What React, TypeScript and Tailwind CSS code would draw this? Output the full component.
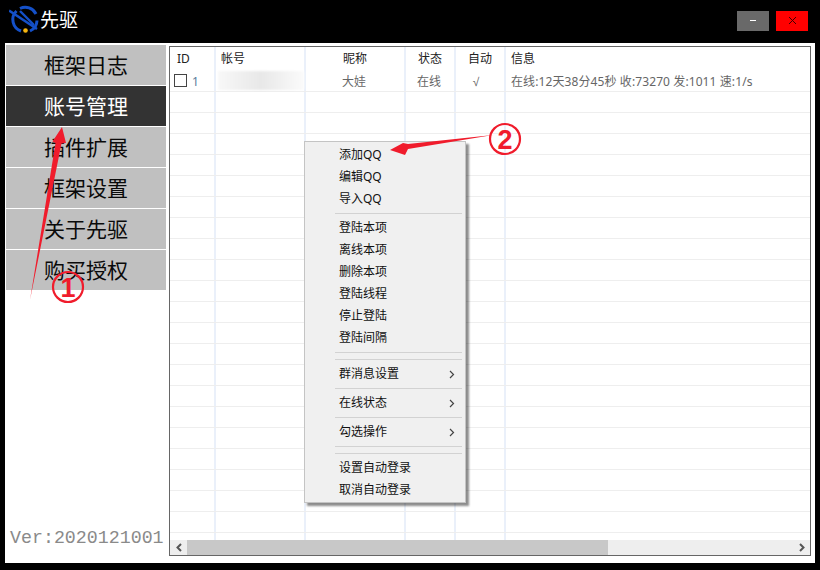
const cjk = { fontFamily: '"Noto Sans", "Noto Sans CJK SC", sans-serif' };

const navItems = ['框架日志', '账号管理', '插件扩展', '框架设置', '关于先驱', '购买授权'];

type Col = { label: string; width: string; align: string };

const columns: Col[] = [
  { label: 'ID', width: 'w-[46px]', align: 'pl-[7px]' },
  { label: '帐号', width: 'w-[90px]', align: 'pl-[5px]' },
  { label: '昵称', width: 'w-[100px]', align: 'justify-center' },
  { label: '状态', width: 'w-[50px]', align: 'justify-center' },
  { label: '自动', width: 'w-[50px]', align: 'justify-center' },
  { label: '信息', width: 'flex-1', align: 'pl-[5px]' },
];

type MenuEntry = { label?: string; sub?: boolean; sep?: boolean };

const menu: MenuEntry[] = [
  { label: '添加QQ' },
  { label: '编辑QQ' },
  { label: '导入QQ' },
  { sep: true },
  { label: '登陆本项' },
  { label: '离线本项' },
  { label: '删除本项' },
  { label: '登陆线程' },
  { label: '停止登陆' },
  { label: '登陆间隔' },
  { sep: true },
  { sep: true },
  { label: '群消息设置', sub: true },
  { sep: true },
  { label: '在线状态', sub: true },
  { sep: true },
  { label: '勾选操作', sub: true },
  { sep: true },
  { sep: true },
  { label: '设置自动登录' },
  { label: '取消自动登录' },
];

function EmptyRow() {
  return (
    <div className="flex h-[21px] shrink-0 border-b border-[#eeeeee]">
      {columns.map((c, i) => (
        <div key={i} className={`${c.width} ${i < 5 ? 'border-r-2 border-[#eaf0fa]' : ''}`} />
      ))}
    </div>
  );
}

export default function App() {
  return (
    <div className="w-[820px] h-[570px] bg-black flex flex-col overflow-hidden relative" style={cjk}>
      {/* title bar */}
      <div className="h-[43px] shrink-0 flex items-center pl-[9px] pr-[12px]">
        <svg width="32" height="30" viewBox="0 0 32 30" className="shrink-0 -mt-[6px]">
          <path d="M7.5 7 A12 12 0 0 0 12 27" fill="none" stroke="#1450c8" strokeWidth="3" />
          <path d="M11 4.5 A12 12 0 0 1 27 10" fill="none" stroke="#1450c8" strokeWidth="3" />
          <path d="M28 16.5 A12 12 0 0 1 21 27" fill="none" stroke="#1450c8" strokeWidth="3" />
          <path d="M0 6.5 L28 25" stroke="#1450c8" strokeWidth="2.6" />
          <path d="M11 7 L25 21" stroke="#1450c8" strokeWidth="2.4" />
          <circle cx="16.5" cy="26.5" r="2.3" fill="#f5b50f" />
        </svg>
        <span className="text-white text-[19px] leading-none -ml-[1px] -mt-[3px]">先驱</span>
        <div className="ml-auto flex gap-[7px] -mt-[2px]">
          <button className="w-[32px] h-[20px] bg-[#696969] flex items-center justify-center">
            <span className="block w-[6px] h-[1px] bg-white" />
          </button>
          <button className="w-[32px] h-[20px] bg-[#ff0000] flex items-center justify-center">
            <svg width="9" height="9" viewBox="0 0 9 9">
              <path d="M1 1 L8 8 M8 1 L1 8" stroke="#400000" strokeWidth="1" />
            </svg>
          </button>
        </div>
      </div>

      {/* body */}
      <div className="mx-[5px] h-[520px] bg-white flex pt-[2px] pl-[1px]">
        <div className="w-[160px] shrink-0 flex flex-col relative">
          {navItems.map((n, i) => (
            <div
              key={n}
              className={`h-[40px] mb-[1px] flex items-center justify-center text-[21px] leading-none ${
                i === 1 ? 'bg-[#333333] text-white' : 'bg-[#c0c0c0] text-[#0a0a0a]'
              }`}
            >
              {n}
            </div>
          ))}
          <div
            className="absolute left-[4px] bottom-[16px] text-[18.3px] leading-none text-[#8a8a8a]"
            style={{ fontFamily: '"Liberation Mono", monospace' }}
          >
            Ver:2020121001
          </div>
        </div>

        {/* list */}
        <div className="ml-[3px] mt-[1px] w-[642px] h-[510px] border border-[#666666] flex flex-col overflow-hidden">
          <div className="flex h-[23px] shrink-0">
            {columns.map((c, i) => (
              <div
                key={c.label}
                className={`${c.width} ${c.align} flex items-center text-[12px] leading-none text-[#222222] ${
                  i < 5 ? 'border-r-2 border-[#eaf0fa]' : ''
                }`}
              >
                {c.label}
              </div>
            ))}
          </div>
          <div className="flex h-[22px] shrink-0 border-b border-[#eeeeee] text-[12px] text-[#666666] leading-none">
            <div className="w-[46px] flex items-center pl-[4px] gap-[5px] border-r-2 border-[#eaf0fa]">
              <span className="w-[13px] h-[13px] border border-[#444444] block" />
              <span className="text-[#5b7d9c] pt-[2px]">1</span>
            </div>
            <div className="w-[90px] border-r-2 border-[#eaf0fa] py-[1px] pl-[2px]">
              <div className="h-full bg-gradient-to-r from-[#f8f8f8] via-[#e8e8e8] to-[#fbfbfb] blur-[1px]" />
            </div>
            <div className="w-[100px] flex items-center justify-center pt-[2px] pr-[2px] border-r-2 border-[#eaf0fa]">大娃</div>
            <div className="w-[50px] flex items-center justify-center pt-[2px] pr-[2px] border-r-2 border-[#eaf0fa]">在线</div>
            <div className="w-[50px] flex items-center justify-center pt-[2px] pr-[8px] border-r-2 border-[#eaf0fa]">
              <span style={{ fontFamily: '"Liberation Sans", sans-serif' }}>√</span>
            </div>
            <div className="flex-1 flex items-center pl-[5px] pt-[2px] whitespace-nowrap tracking-[0.1px]">
              在线:12天38分45秒 收:73270 发:1011 速:1/s
            </div>
          </div>
          <div className="flex-1 flex flex-col overflow-hidden">
            {Array.from({ length: 22 }).map((_, i) => (
              <EmptyRow key={i} />
            ))}
          </div>
          {/* scrollbar */}
          <div className="h-[15px] shrink-0 bg-[#eeeeee] flex items-center relative">
            <div className="w-[17px] flex justify-center">
              <svg width="8" height="9" viewBox="0 0 8 9">
                <path d="M6 1 L2.5 4.5 L6 8" fill="none" stroke="#555555" strokeWidth="2" />
              </svg>
            </div>
            <div className="w-[421px] h-full bg-[#c8c8c8]" />
            <div className="ml-auto w-[17px] flex justify-center">
              <svg width="8" height="9" viewBox="0 0 8 9">
                <path d="M2 1 L5.5 4.5 L2 8" fill="none" stroke="#555555" strokeWidth="2" />
              </svg>
            </div>
          </div>
        </div>
      </div>

      {/* context menu */}
      <div className="absolute left-[304px] top-[141px] w-[162px] h-[362px] bg-[#f0f0f0] border border-[#c4c4c4] pt-[2px] shadow-[3px_3px_2px_rgba(0,0,0,0.45)]">
        {menu.map((m, i) =>
          m.sep ? (
            <div key={i} className="h-[7px] ml-[30px] mr-[3px] flex items-center">
              <div className="w-full h-[1px] bg-[#d2d2d2]" />
            </div>
          ) : (
            <div key={i} className="h-[22px] pl-[34px] pr-[10px] flex items-center justify-between text-[12px] leading-none text-[#111111]">
              <span>{m.label}</span>
              {m.sub && (
                <svg width="6" height="9" viewBox="0 0 6 9">
                  <path d="M1 1 L4.5 4.5 L1 8" fill="none" stroke="#444444" strokeWidth="1.2" />
                </svg>
              )}
            </div>
          ),
        )}
      </div>

      {/* annotation arrows */}
      <svg width="820" height="570" viewBox="0 0 820 570" className="absolute left-0 top-0 pointer-events-none">
        <path d="M30 300 L55.5 143 L52.5 141.5 L62 127 L66 143 L61.5 143.5 Z" fill="#f01c2c" />
        <path d="M493 135 L408 144 L403 143 L390 150 L405 155 L408 149 Z" fill="#f01c2c" />
        <circle cx="68" cy="287" r="15" fill="none" stroke="#f01c2c" strokeWidth="2.2" />
        <text x="68" y="297" textAnchor="middle" fontSize="27" fontWeight="700" fill="#f01c2c" fontFamily="Liberation Sans, sans-serif">1</text>
        <circle cx="505" cy="139" r="15" fill="none" stroke="#f01c2c" strokeWidth="2.2" />
        <text x="505" y="149" textAnchor="middle" fontSize="27" fontWeight="700" fill="#f01c2c" fontFamily="Liberation Sans, sans-serif">2</text>
      </svg>
    </div>
  );
}
